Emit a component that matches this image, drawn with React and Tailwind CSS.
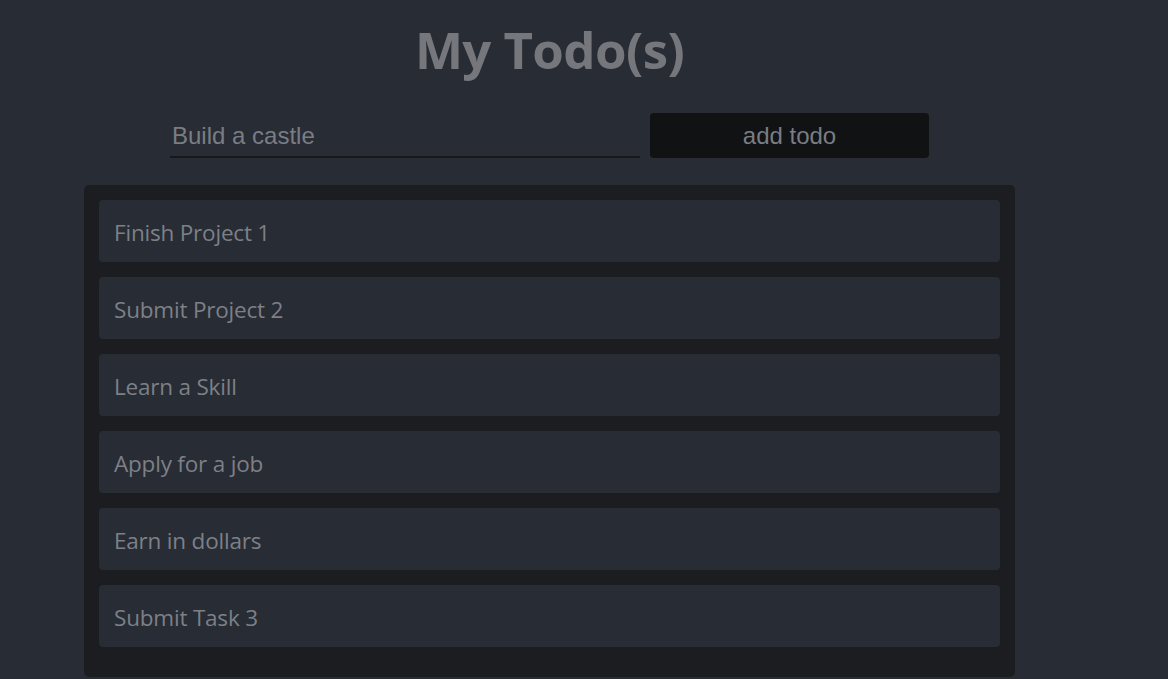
import React, { useState } from 'react';

const initialTodos = [
    'Finish Project 1',
    'Submit Project 2',
    'Learn a Skill',
    'Apply for a job',
    'Earn in dollars',
    'Submit Task 3',
];

const App = () => {
    const [todos, setTodos] = useState(initialTodos);
    const [text, setText] = useState('Build a castle');

    const addTodo = () => {
        if (!text.trim()) return;
        setTodos([...todos, text]);
        setText('');
    };

    return (
        <div className="min-h-[679px] bg-[#282c34] overflow-hidden" style={{ fontFamily: '"Open Sans", sans-serif' }}>
            <div className="w-[1099px] flex flex-col items-center">
                <h1 className="mt-[13px] text-[51px] leading-[72px] font-bold text-[#75777c] tracking-[-0.6px]">My Todo(s)</h1>

                {/* Input row */}
                <div className="mt-[28px] flex items-end gap-[10px]">
                    <input
                        autoFocus
                        value={text}
                        onChange={(e) => setText(e.target.value)}
                        className="w-[470px] h-[45px] bg-transparent border-b-2 border-[#17181b] outline-none px-[2px] pt-[2px] text-[24px] text-[#7a7d83] caret-[#9a9ca1]"
                        style={{ fontFamily: '"Liberation Sans", Arial, sans-serif' }}
                    />
                    <button
                        onClick={addTodo}
                        className="w-[279px] h-[45px] rounded-[4px] bg-[#111214] text-[24px] text-[#7a7d83]"
                        style={{ fontFamily: '"Liberation Sans", Arial, sans-serif' }}
                    >
                        add todo
                    </button>
                </div>

                {/* Todo list */}
                <div className="mt-[27px] w-[931px] bg-[#1b1d21] rounded-[5px] p-[15px] pb-[15px]">
                    {todos.map((todo, i) => (
                        <div
                            key={i}
                            className="h-[62px] mb-[15px] flex items-center px-[15px] pt-[3px] bg-[#282c34] rounded-[4px] text-[22.5px] text-[#7d8087] tracking-[-0.2px]"
                        >
                            {todo}
                        </div>
                    ))}
                </div>
            </div>
        </div>
    );
};

export default App;
